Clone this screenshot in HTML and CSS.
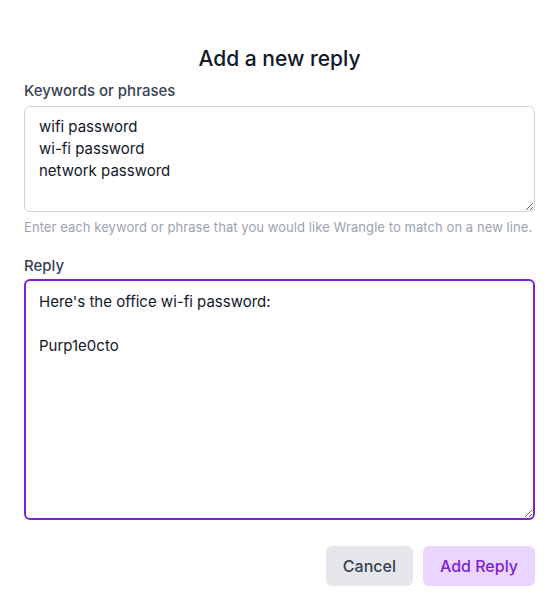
FILE: index.html
```html
<!DOCTYPE html>
<html lang="en">
<head>
<meta charset="utf-8">
<title>Add a new reply</title>
<link rel="stylesheet" href="styles.css">
</head>
<body>
<div class="dialog">
  <h1 class="title">Add a new reply</h1>
  <form class="form">
    <div class="field">
      <label class="label" for="kw">Keywords or phrases</label>
      <textarea id="kw" class="input keywords">wifi password
wi-fi password
network password</textarea>
      <p class="help">Enter each keyword or phrase that you would like Wrangle to match on a new line.</p>
    </div>
    <div class="field reply-field">
      <label class="label reply-label" for="reply">Reply</label>
      <textarea id="reply" class="input reply focused">Here's the office wi-fi password:

Purp1e0cto</textarea>
    </div>
    <div class="actions">
      <button type="button" class="btn cancel">Cancel</button>
      <button type="button" class="btn primary">Add Reply</button>
    </div>
  </form>
</div>
</body>
</html>
```
FILE: styles.css
```css
* { box-sizing: border-box; }
html, body { margin: 0; background: #ffffff; }
body {
  font-family: Inter, "Noto Sans", sans-serif;
  color: #111827;
}
.dialog {
  padding: 46px 23px 0 24px;
}
.title {
  margin: 0;
  text-align: center;
  font-size: 21px;
  line-height: 26px;
  font-weight: 500;
  color: #111827;
}
.form {
  margin-top: 9px;
  display: flex;
  flex-direction: column;
}
.field { display: flex; flex-direction: column; }
.label {
  font-size: 15px;
  line-height: 20px;
  font-weight: 500;
  color: #374151;
  margin-bottom: 5px;
}
.reply-label { margin-bottom: 3px; }
.input {
  display: block;
  width: 100%;
  font-family: inherit;
  font-size: 15px;
  line-height: 22px;
  color: #111827;
  border: 1px solid #d1d5db;
  border-radius: 6px;
  padding: 9px 14px 8px 14px;
  resize: vertical;
  outline: none;
  background: #fff;
}
.keywords { height: 106px; }
.help {
  margin: 6px 0 0 0;
  font-size: 13px;
  line-height: 18px;
  letter-spacing: 0.07px;
  color: #9ca3af;
}
.reply-field { margin-top: 20px; }
.reply { height: 241px; }
.focused {
  border: 2px solid #7e22ce;
  padding: 10px 13px;
}
.actions {
  margin-top: 26px;
  display: flex;
  justify-content: flex-end;
  gap: 10px;
}
.btn {
  font-family: inherit;
  font-size: 16px;
  font-weight: 500;
  height: 40px;
  border: none;
  border-radius: 6px;
  padding: 0 17px;
  cursor: pointer;
}
.cancel { background: #e5e7eb; color: #374151; }
.primary { background: #e9d5ff; color: #7e22ce; }
```
